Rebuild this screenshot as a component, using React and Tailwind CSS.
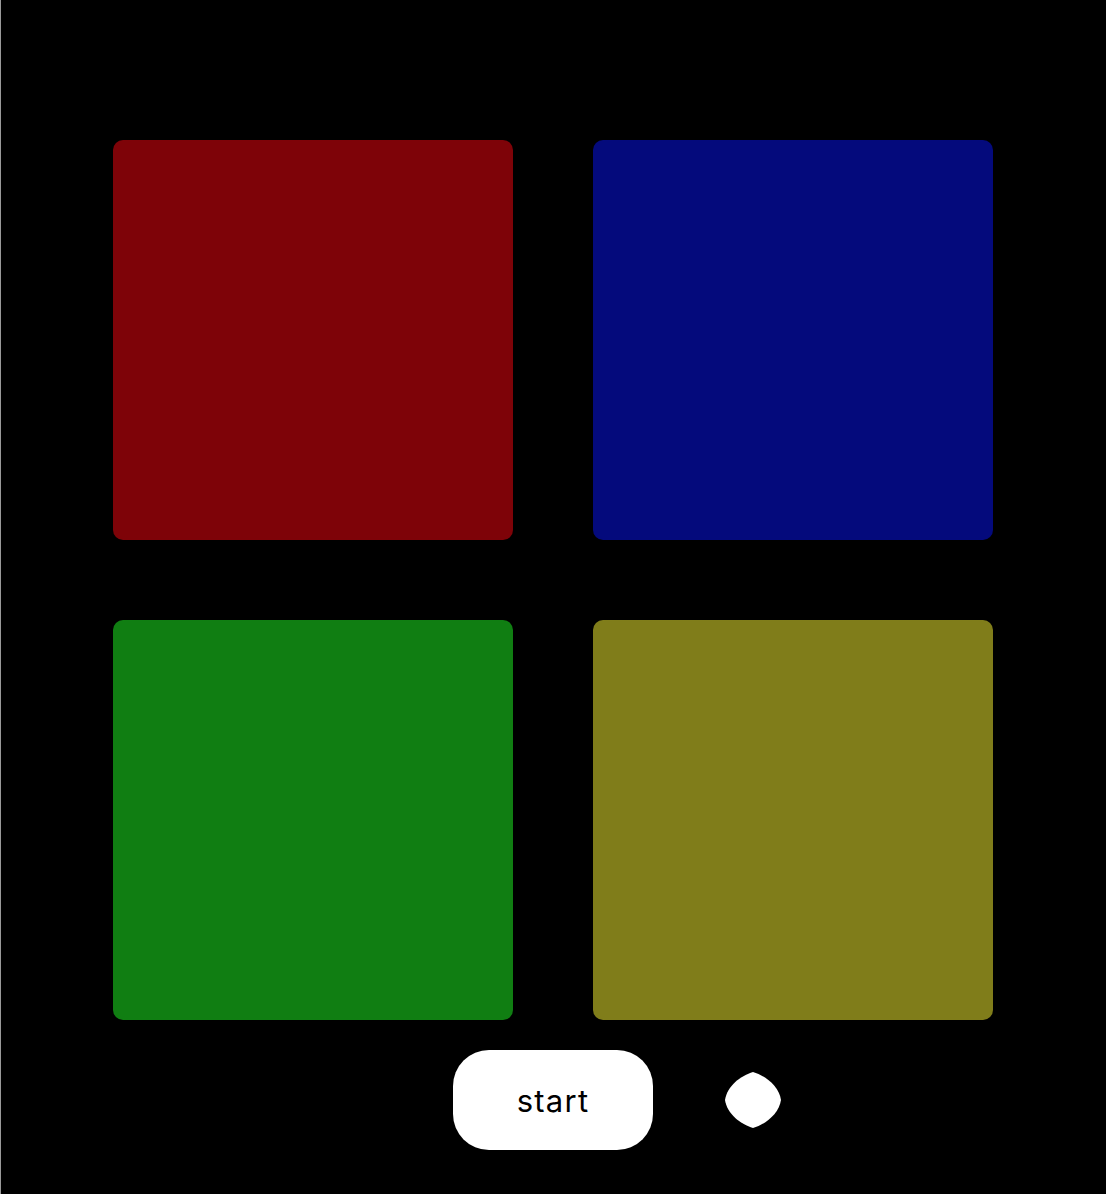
export default function App() {
  return (
    <div className="min-h-screen w-full bg-black shadow-[inset_1px_0_0_#9a9a9a] flex flex-col items-center pt-[140px]" style={{ fontFamily: 'Inter, "Liberation Sans", sans-serif' }}>
      <div className="grid grid-cols-[400px_400px] grid-rows-[400px_400px] gap-[80px]">
        <div className="rounded-[10px] bg-[#7e0308]" />
        <div className="rounded-[10px] bg-[#040a7c]" />
        <div className="rounded-[10px] bg-[#107e12]" />
        <div className="rounded-[10px] bg-[#807d1a]" />
      </div>
      <div className="mt-[30px] w-full grid grid-cols-[1fr_200px_1fr] items-center">
        <div />
        <button className="h-[100px] w-[200px] rounded-[36px] bg-white text-black text-[31px] tracking-[0.04em] leading-none flex items-center justify-center">
          start
        </button>
        <div className="pl-[71px] flex items-center">
          <svg width="58" height="58" viewBox="0 0 58 58">
            <path d="M29 1 C17 4.5 3 15 1 29 C3 43 17 53.5 29 57 C41 53.5 55 43 57 29 C55 15 41 4.5 29 1 Z" fill="white" />
          </svg>
        </div>
      </div>
    </div>
  );
}
